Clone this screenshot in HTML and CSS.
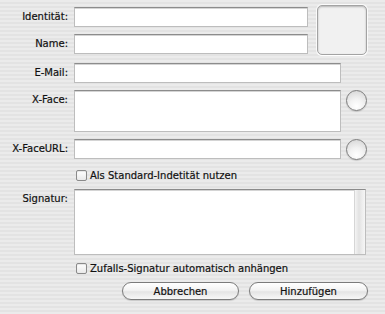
FILE: index.html
```html
<!DOCTYPE html>
<html lang="de">
<head>
    <meta charset="UTF-8">
    <title>Identität hinzufügen</title>
    <link rel="stylesheet" href="styles.css">
</head>
<body>
    <div class="panel">
        <div class="top">
            <div class="top-fields">
                <div class="row">
                    <span class="label">Identität:</span>
                    <span class="field short"></span>
                </div>
                <div class="row gap">
                    <span class="label">Name:</span>
                    <span class="field short"></span>
                </div>
            </div>
            <div class="well"></div>
        </div>

        <div class="row email">
            <span class="label">E-Mail:</span>
            <span class="field wide"></span>
        </div>

        <div class="row area-row">
            <span class="label">X-Face:</span>
            <span class="field wide face"></span>
            <span class="round"></span>
        </div>

        <div class="row area-row">
            <span class="label">X-FaceURL:</span>
            <span class="field wide"></span>
            <span class="round"></span>
        </div>

        <div class="check-row first">
            <span class="box"></span>
            <span class="check-text">Als Standard-Indetität nutzen</span>
        </div>

        <div class="row area-row">
            <span class="label">Signatur:</span>
            <span class="field signature">
                <span class="scroll"></span>
            </span>
        </div>

        <div class="check-row">
            <span class="box"></span>
            <span class="check-text">Zufalls-Signatur automatisch anhängen</span>
        </div>

        <div class="buttons">
            <button class="btn">Abbrechen</button>
            <button class="btn add">Hinzufügen</button>
        </div>
    </div>
</body>
</html>
```

FILE: styles.css
```css
* {
    margin: 0;
    padding: 0;
    box-sizing: border-box;
}

body {
    font-family: 'DejaVu Sans', Verdana, sans-serif;
    font-size: 10px;
    color: #111;
    -webkit-text-stroke: 0.2px #111;
    background: repeating-linear-gradient(#ebebeb 0 2px, #e3e3e3 2px 4px);
    width: 385px;
    height: 314px;
    overflow: hidden;
}

.panel {
    padding-top: 5px;
}

.top {
    display: flex;
}

.top-fields {
    padding-top: 2px;
}

.row {
    display: flex;
    align-items: center;
    height: 20px;
}

.row.gap {
    margin-top: 7px;
}

.row.email {
    margin-top: 8px;
}

.row.area-row {
    margin-top: 7px;
    height: auto;
    align-items: flex-start;
}

.label {
    width: 74px;
    padding-right: 6px;
    text-align: right;
    line-height: 20px;
    flex-shrink: 0;
}

.field {
    display: block;
    height: 20px;
    background: #fff;
    border: 1px solid #bdbdbd;
    border-top-color: #8c8c8c;
    box-shadow: inset 0 1px 0 #d4d4d4;
}

.short {
    width: 234px;
}

.wide {
    width: 267px;
}

.face {
    height: 42px;
}

.signature {
    position: relative;
    width: 292px;
    height: 66px;
}

.scroll {
    position: absolute;
    top: 0;
    right: 0;
    bottom: 0;
    width: 11px;
    border-left: 1px solid #d6d6d6;
    background: linear-gradient(90deg, #f4f4f4, #e2e2e2 40%, #ededed 70%, #f6f6f6);
}

.well {
    width: 50px;
    height: 50px;
    margin-left: 9px;
    border: 1px solid #a3a3a3;
    border-radius: 5px;
    background: #f1f1f1;
    box-shadow: inset 0 1px 2px rgba(0,0,0,0.25), 0 1px 0 #fff, 0 0 0 1px rgba(255,255,255,0.8);
}

.round {
    width: 21px;
    height: 21px;
    margin-left: 5px;
    border-radius: 50%;
    border: 1px solid #7d7d7d;
    background: radial-gradient(circle at 50% 80%, #ffffff 0, #f2f2f2 40%, #d2d2d2 100%);
    box-shadow: 0 1px 1px rgba(0,0,0,0.15);
}

.check-row {
    display: flex;
    align-items: center;
    height: 13px;
    margin-top: 7px;
    padding-left: 76px;
}

.check-row.first {
    margin-top: 9px;
}

.box {
    width: 11px;
    height: 11px;
    border: 1px solid #8a8a8a;
    border-radius: 2px;
    background: linear-gradient(#ffffff, #e9e9e9);
    box-shadow: inset 0 1px 1px rgba(0,0,0,0.1);
}

.check-text {
    margin-left: 3px;
}

.buttons {
    display: flex;
    margin-top: 7px;
    padding-left: 122px;
}

.btn {
    width: 117px;
    height: 18px;
    border: 1px solid #7b7b7b;
    border-radius: 9px;
    font-family: inherit;
    font-size: 10px;
    color: #111;
    -webkit-text-stroke: 0.2px #111;
    background: linear-gradient(#ffffff 0%, #f3f3f3 45%, #e4e4e4 55%, #f7f7f7 100%);
    box-shadow: 0 1px 1px rgba(0,0,0,0.15);
}

.btn.add {
    width: 119px;
    margin-left: 10px;
}
```
